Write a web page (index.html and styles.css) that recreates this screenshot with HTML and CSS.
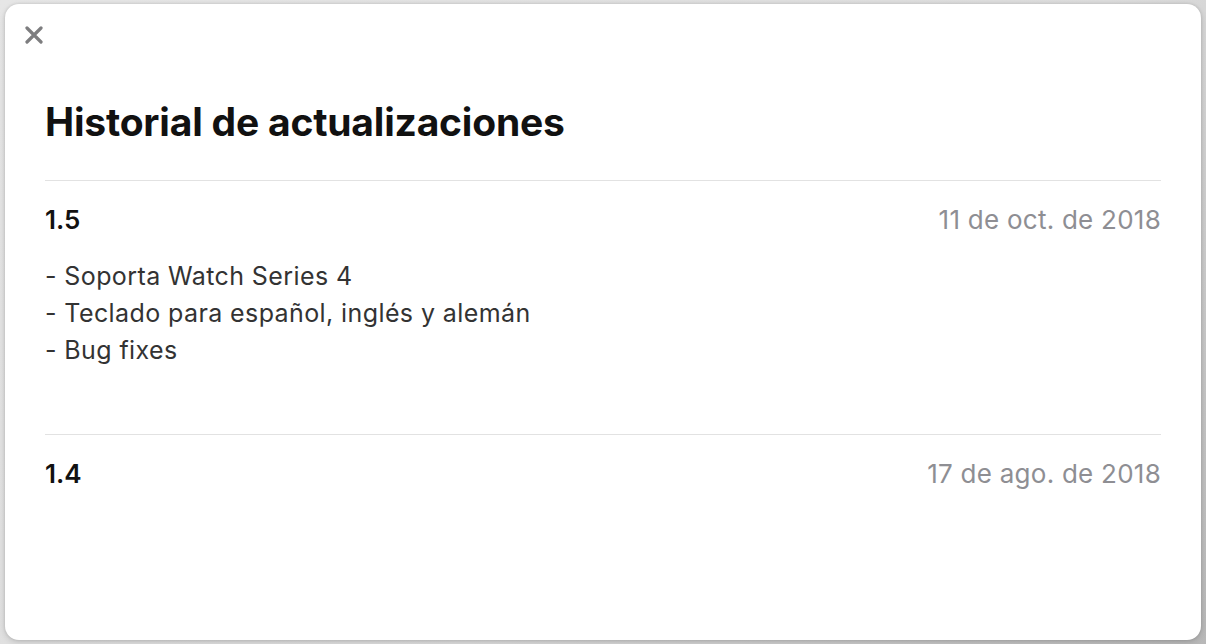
FILE: index.html
```html
<!DOCTYPE html>
<html lang="es">
<head>
<meta charset="utf-8">
<title>Historial de actualizaciones</title>
<link rel="stylesheet" href="styles.css">
</head>
<body>
<div class="backdrop">
  <div class="modal">
    <button class="close" aria-label="Cerrar">
      <svg width="18" height="18" viewBox="0 0 18 18"><path d="M2 2 L16 16 M16 2 L2 16" stroke="#7d7d7f" stroke-width="3.2" stroke-linecap="round"/></svg>
    </button>
    <h1 class="title">Historial de actualizaciones</h1>
    <section class="version">
      <div class="vhead"><span class="vnum">1.5</span><span class="vdate">11 de oct. de 2018</span></div>
      <div class="notes">
        <p>- Soporta Watch Series 4</p>
        <p>- Teclado para español, inglés y alemán</p>
        <p>- Bug fixes</p>
      </div>
    </section>
    <section class="version">
      <div class="vhead"><span class="vnum">1.4</span><span class="vdate">17 de ago. de 2018</span></div>
    </section>
  </div>
</div>
</body>
</html>
```
FILE: styles.css
```css
html, body {
  margin: 0;
  padding: 0;
  height: 100%;
}
body {
  background: linear-gradient(135deg, #e6e6e6 0%, #dcdcdc 60%, #b8b8b8 100%);
  font-family: Inter, "Liberation Sans", sans-serif;
  overflow: hidden;
}
.backdrop {
  height: 100%;
  box-sizing: border-box;
  padding: 4px 5px 4px 5px;
}
.modal {
  position: relative;
  height: 100%;
  box-sizing: border-box;
  background: #fff;
  border-radius: 14px;
  box-shadow: 0 0 3px rgba(0,0,0,0.12), 0 2px 6px rgba(0,0,0,0.15);
  padding: 0 40px 0 40px;
}
.close {
  position: absolute;
  left: 20px;
  top: 22px;
  width: 18px;
  height: 18px;
  padding: 0;
  border: 0;
  background: none;
  display: flex;
}
.title {
  margin: 0;
  padding-top: 93px;
  padding-bottom: 33px;
  font-size: 39px;
  font-weight: 700;
  color: #111;
  letter-spacing: -0.2px;
  line-height: 50px;
  border-bottom: 1px solid #e2e2e2;
}
.version {
  padding-top: 22px;
}
.version + .version {
  border-top: 1px solid #e2e2e2;
}
.vhead {
  display: flex;
  justify-content: space-between;
  align-items: baseline;
  line-height: 34px;
}
.vnum {
  font-size: 26px;
  font-weight: 600;
  color: #111;
}
.vdate {
  font-size: 26px;
  letter-spacing: 0.25px;
  color: #8e8e93;
}
.notes {
  padding-top: 21px;
  padding-bottom: 65px;
}
.notes p {
  margin: 0;
  font-size: 25px;
  letter-spacing: 0.4px;
  line-height: 37px;
  color: #333;
}
```
